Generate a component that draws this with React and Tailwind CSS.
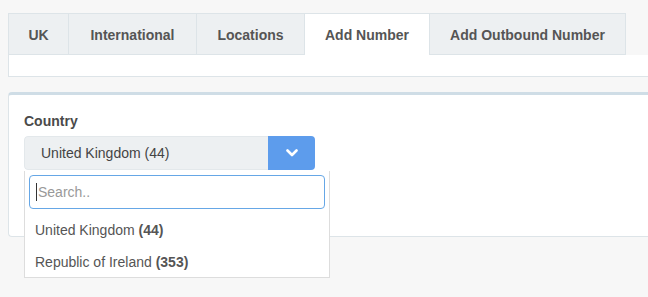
import React from "react";

const tabs = [
  { t: "UK", w: "w-[61px]" },
  { t: "International", w: "w-[128px]" },
  { t: "Locations", w: "w-[108px]" },
  { t: "Add Number", w: "w-[125px]" },
  { t: "Add Outbound Number", w: "w-[196px]" },
];

export default function App() {
  return (
    <div
      className="w-[648px] h-[297px] overflow-hidden bg-[#f7f7f7] pl-2 pt-[13px] text-[#555555]"
      style={{ fontFamily: '"Liberation Sans", Arial, sans-serif' }}
    >
      <div className="flex h-[42px]">
        {tabs.map(({ t, w }) => {
          const active = t === "Add Number";
          return (
            <div
              key={t}
              className={
                (active
                  ? "bg-white border border-[#dde4e8] border-b-0 border-l-0 "
                  : "bg-[#edf0f2] border border-[#dde4e8] border-l-0 first:border-l ") +
                w +
                " flex items-center justify-center pt-[2px] h-[42px] shrink-0 text-[14px] font-bold text-[#555555]"
              }
            >
              {t}
            </div>
          );
        })}
      </div>
      <div className="h-[22px] bg-white border border-[#dde4e8] border-t-0 border-r-0" />
      <div className="mt-[15px] h-[145px] bg-white border border-[#dde4e8] border-t-[3px] border-t-[#cfdde6] border-r-0 rounded-l-[4px] pl-[15px] pt-[16px]">
        <div className="text-[14px] font-bold text-[#4a4a4a] leading-[20px]">Country</div>
        <div className="relative mt-[5px] w-[291px]">
          <div className="flex w-[291px] h-[34px] rounded-[4px] overflow-hidden">
            <div className="flex-1 bg-[#edf0f2] border border-[#e3e8eb] border-r-0 rounded-l-[4px] flex items-center pl-[16px] text-[14px] text-[#444]">
              United Kingdom (44)
            </div>
            <div className="w-[47px] bg-[#5d9cec] flex items-center justify-center">
              <svg width="12" height="8" viewBox="0 0 12 8">
                <path d="M1.5 1.5 L6 6 L10.5 1.5" fill="none" stroke="white" strokeWidth="2.6" strokeLinecap="round" strokeLinejoin="round" />
              </svg>
            </div>
          </div>
          <div className="absolute left-0 top-[35px] w-[306px] bg-white border border-[#dddddd] border-t-0 z-10">
            <div className="px-[4px] pt-[4px] pb-[5px]">
              <div className="h-[34px] border border-[#66a7e6] rounded-[4px] flex items-center pl-[6px] text-[14px] text-[#999]">
                <span className="w-px h-[18px] bg-[#333] mr-[1px]" />
                Search..
              </div>
            </div>
            <div className="h-[32px] flex items-center pl-[10px] text-[14px] text-[#555]">
              United Kingdom&nbsp;<b>(44)</b>
            </div>
            <div className="h-[31px] flex items-center pl-[10px] pt-[1px] text-[14px] text-[#555]">
              Republic of Ireland&nbsp;<b>(353)</b>
            </div>
          </div>
        </div>
      </div>
    </div>
  );
}
